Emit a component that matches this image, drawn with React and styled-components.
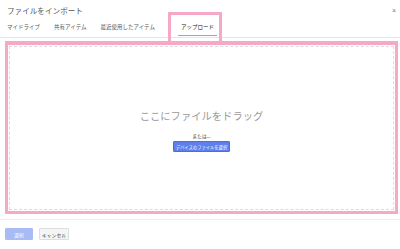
import React from 'react'
import styled, { createGlobalStyle } from 'styled-components';

const GlobalStyle = createGlobalStyle`
 html, body {
  margin: 0;
  padding: 0;
  background: #fff;
 }
 body {
  font-family: "Noto Sans CJK JP", "Noto Sans", sans-serif;
 }
`;

const tabs = ['マイドライブ', '共有アイテム', '最近使用したアイテム', 'アップロード'];

const App = () => {
 return (
  <Styled_Dialog>
   <GlobalStyle />
   {/* Header */}
   <Styled_Header>
    <Styled_Title>ファイルをインポート</Styled_Title>
    <Styled_Close>×</Styled_Close>
   </Styled_Header>
   {/* Tabs */}
   <Styled_Tabs>
    {tabs.map((t, i) => (
     <Styled_Tab key={t} active={i === 3}>{t}</Styled_Tab>
    ))}
   </Styled_Tabs>
   {/* Drop zone */}
   <Styled_Drop>
    <Styled_DropInner>
     <Styled_DropText>ここにファイルをドラッグ</Styled_DropText>
     <Styled_Or>または...</Styled_Or>
     <Styled_BlueButton>デバイスのファイルを選択</Styled_BlueButton>
    </Styled_DropInner>
   </Styled_Drop>
   {/* Footer */}
   <Styled_Footer>
    <Styled_Button primary>選択</Styled_Button>
    <Styled_Button>キャンセル</Styled_Button>
   </Styled_Footer>
  </Styled_Dialog>
 )
};

const Styled_Dialog = styled.div`
 width: 400px;
 height: 249px;
 display: flex;
 flex-direction: column;
 overflow: hidden;
`;
const Styled_Header = styled.div`
 height: 21px;
 padding: 0 4px 0 7px;
 display: flex;
 align-items: center;
 justify-content: space-between;
`;
const Styled_Title = styled.div`
 font-size: 7.6px;
 color: #555;
`;
const Styled_Close = styled.div`
 font-size: 7px;
 color: #777;
 font-family: "Liberation Sans", sans-serif;
`;
const Styled_Tabs = styled.div`
 height: 17px;
 display: flex;
 align-items: stretch;
 gap: 8px;
 padding-left: 4px;
 border-bottom: 1px solid #e6e6e6;
 box-sizing: border-box;
`;
const Styled_Tab = styled.div`
 position: relative;
 display: flex;
 align-items: center;
 padding: 0 3px 2px;
 margin-left: ${p => p.active ? '12px' : '0'};
 font-size: 5.5px;
 color: ${p => p.active ? '#222' : '#555'};
 border-bottom: 1.5px solid ${p => p.active ? '#8fa4e0' : 'transparent'};
 margin-bottom: 1px;

 ${p => p.active && `
  &::after{
   content: '';
   position: absolute;
   left: -10px;
   right: -5px;
   top: -9px;
   bottom: -9px;
   border: 3px solid #f5a9c7;
   box-sizing: border-box;
   pointer-events: none;
  }
 `}
`;
const Styled_Drop = styled.div`
 margin: 3px 2px 0 5px;
 height: 173px;
 border: 3px solid #f5a9c7;
 border-top-width: 4px;
 box-sizing: border-box;
 padding: 1px;
`;
const Styled_DropInner = styled.div`
 height: 100%;
 box-sizing: border-box;
 border: 1px dashed #dcdcdc;
 display: flex;
 flex-direction: column;
 align-items: center;
 padding-top: 62px;
`;
const Styled_DropText = styled.div`
 font-size: 10.3px;
 color: #9a9a9a;
 line-height: 14px;
`;
const Styled_Or = styled.div`
 margin-top: 9px;
 font-size: 4.8px;
 color: #444;
 line-height: 7px;
`;
const Styled_BlueButton = styled.div`
 margin-top: 2px;
 width: 57px;
 height: 11px;
 box-sizing: border-box;
 background: #5f80ec;
 border: 1px solid #4a6fd8;
 border-radius: 1px;
 color: #fff;
 font-size: 4.3px;
 display: flex;
 align-items: center;
 justify-content: center;
`;
const Styled_Footer = styled.div`
 margin-top: 5px;
 border-top: 1px solid #ececec;
 padding: 8px 5px 0;
 display: flex;
 gap: 6px;
`;
const Styled_Button = styled.div`
 height: 12px;
 width: ${p => p.primary ? '28px' : '30px'};
 justify-content: center;
 box-sizing: border-box;
 display: flex;
 align-items: center;
 font-size: 4.8px;
 border-radius: 1px;
 background: ${p => p.primary ? '#a8bbf5' : '#f5f5f5'};
 border: 1px solid ${p => p.primary ? '#a8bbf5' : '#dedede'};
 color: ${p => p.primary ? '#fff' : '#444'};
`;

export default App
